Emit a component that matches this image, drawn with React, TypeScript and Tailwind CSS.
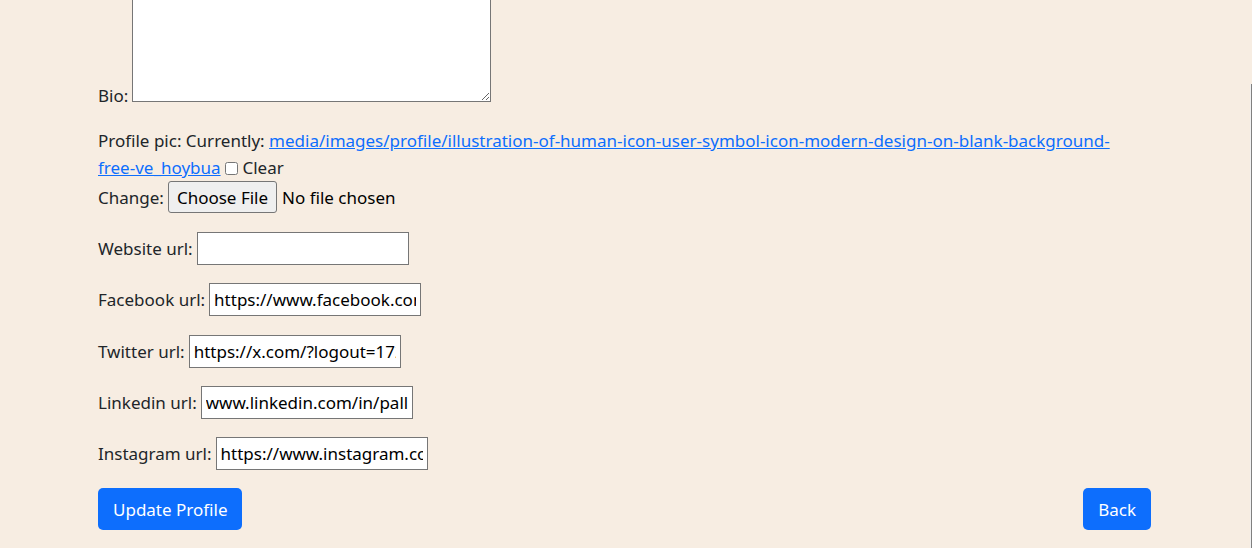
import React from "react";

function UrlRow({ label, value }: { label: string; value: string }) {
  return (
    <div className="flex h-[33px] items-center gap-[4px] mb-[18.25px]">
      <label className="whitespace-nowrap">{label}</label>
      <input
        type="text"
        readOnly
        value={value}
        className="h-[33px] w-[212px] border border-[#767676] bg-white px-[4px] text-[17px] text-black outline-none"
      />
    </div>
  );
}

export default function App() {
  return (
    <div
      className="relative h-[548px] w-[1252px] overflow-hidden bg-[#f7ede2] text-[17px] leading-[27px] text-[#212529]"
      style={{ fontFamily: '"Noto Sans", "Open Sans", sans-serif' }}
    >
      <div className="ml-[98px] w-[1053px]">
        {/* Bio */}
        <div className="mt-[-98px] flex items-end">
          <label className="mb-[-2px] mr-[3.5px] leading-none">Bio:</label>
          <textarea
            readOnly
            className="block h-[200px] w-[359px] border border-[#767676] bg-white outline-none"
          />
        </div>

        {/* Profile pic */}
        <div className="mt-[25px]">
          <div>
            Profile pic: Currently:{" "}
            <a href="#" className="text-[#0d6efd] underline">
              media/images/profile/illustration-of-human-icon-user-symbol-icon-modern-design-on-blank-background-
              <br />
              free-ve_hoybua
            </a>{" "}
            <input
              type="checkbox"
              className="inline-block h-[13px] w-[13px] align-[-1px]"
            />{" "}
            Clear
          </div>
          <div className="flex h-[32px] items-center">
            <span className="mr-[4px]">Change:</span>
            <span className="flex h-[32px] items-center rounded-[3px] border border-[#767676] bg-[#efefef] px-[8px] text-black">
              Choose File
            </span>
            <span className="ml-[5px] text-black">No file chosen</span>
          </div>
        </div>

        {/* URL rows */}
        <div className="mt-[19px]">
          <UrlRow label="Website url:" value="" />
          <UrlRow label="Facebook url:" value="https://www.facebook.com/" />
          <UrlRow label="Twitter url:" value="https://x.com/?logout=1720000000" />
          <UrlRow label="Linkedin url:" value="www.linkedin.com/in/pallavi" />
          <UrlRow label="Instagram url:" value="https://www.instagram.com/" />
        </div>

        {/* Buttons */}
        <div className="mt-[2px] flex justify-between">
          <button className="h-[42px] rounded-[5px] bg-[#0d6efd] px-[15px] text-white">
            Update Profile
          </button>
          <button className="h-[42px] rounded-[5px] bg-[#0d6efd] px-[15px] text-white">
            Back
          </button>
        </div>
      </div>

      <div className="absolute right-0 top-[84px] bottom-0 w-[2px] border-r border-[#808080] bg-[#f0f0f0]" />
    </div>
  );
}
